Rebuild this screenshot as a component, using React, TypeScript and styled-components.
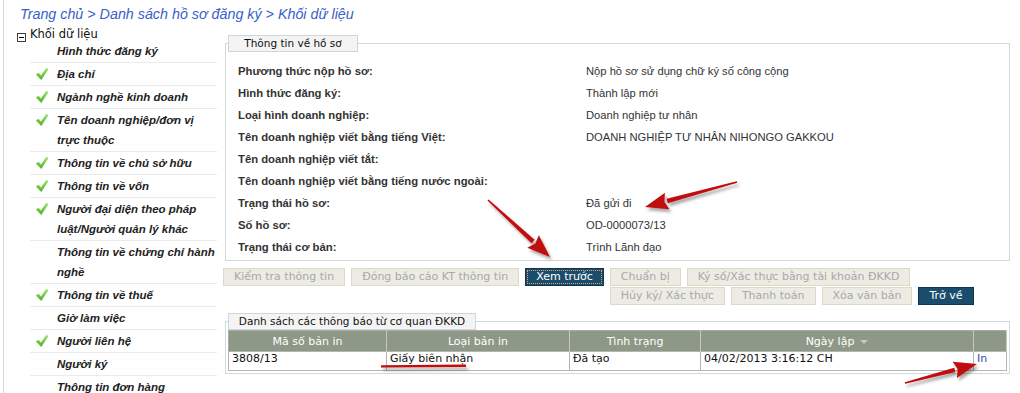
import React from 'react';
import styled, { createGlobalStyle } from 'styled-components';

const GlobalStyle = createGlobalStyle`
  html, body { margin: 0; padding: 0; background: #fff; }
  body { font-family: "DejaVu Sans", "Liberation Sans", Arial, sans-serif; }
`;

interface TreeEntry {
  label: string;
  done: boolean;
}

interface InfoRow {
  label: string;
  value: string;
}

const treeItems: TreeEntry[] = [
  { label: 'Hình thức đăng ký', done: false },
  { label: 'Địa chỉ', done: true },
  { label: 'Ngành nghề kinh doanh', done: true },
  { label: 'Tên doanh nghiệp/đơn vị trực thuộc', done: true },
  { label: 'Thông tin về chủ sở hữu', done: true },
  { label: 'Thông tin về vốn', done: true },
  { label: 'Người đại diện theo pháp luật/Người quản lý khác', done: true },
  { label: 'Thông tin về chứng chỉ hành nghề', done: false },
  { label: 'Thông tin về thuế', done: true },
  { label: 'Giờ làm việc', done: false },
  { label: 'Người liên hệ', done: true },
  { label: 'Người ký', done: false },
  { label: 'Thông tin đơn hàng', done: false },
];

const infoRows: InfoRow[] = [
  { label: 'Phương thức nộp hồ sơ:', value: 'Nộp hồ sơ sử dụng chữ ký số công cộng' },
  { label: 'Hình thức đăng ký:', value: 'Thành lập mới' },
  { label: 'Loại hình doanh nghiệp:', value: 'Doanh nghiệp tư nhân' },
  { label: 'Tên doanh nghiệp viết bằng tiếng Việt:', value: 'DOANH NGHIỆP TƯ NHÂN NIHONGO GAKKOU' },
  { label: 'Tên doanh nghiệp viết tắt:', value: '' },
  { label: 'Tên doanh nghiệp viết bằng tiếng nước ngoài:', value: '' },
  { label: 'Trạng thái hồ sơ:', value: 'Đã gửi đi' },
  { label: 'Số hồ sơ:', value: 'OD-0000073/13' },
  { label: 'Trạng thái cơ bản:', value: 'Trình Lãnh đạo' },
];

const Page = styled.div`
  position: relative;
  width: 1017px;
  height: 393px;
  margin-left: 3px;
  border-left: 1px solid #d6d6d6;
  box-sizing: border-box;
  overflow: hidden;
`;

const Breadcrumb = styled.div`
  padding: 5px 0 0 16px;
  font: italic 14.3px/18px "Liberation Sans", Arial, sans-serif;
  color: #3a5fc8;
`;

const Body = styled.div`
  display: flex;
  align-items: flex-start;
`;

const Sidebar = styled.div`
  width: 219px;
  flex-shrink: 0;
`;

const TreeHeader = styled.div`
  display: flex;
  align-items: flex-end;
  height: 17px;
  padding-left: 13px;
  font-size: 11.5px;
  line-height: 12px;
  color: #111;
`;

const MinusBox = styled.span`
  position: relative;
  width: 9px;
  height: 9px;
  margin: 0 4px -2px 0;
  border: 1px solid #3c3c3c;
  box-sizing: border-box;
  background: #fff;

  &::after {
    content: '';
    position: absolute;
    left: 1px;
    right: 1px;
    top: 3px;
    height: 1px;
    background: #000;
  }
`;

const TreeList = styled.ul`
  list-style: none;
  margin: 0 0 0 26px;
  padding: 0;
  width: 187px;
`;

const TreeItem = styled.li`
  display: flex;
  padding: 1px 0;
  border-bottom: 1px solid #ebebeb;
`;

const CheckSlot = styled.span`
  width: 27px;
  height: 20px;
  flex-shrink: 0;
  display: flex;
  align-items: center;
  padding-left: 5px;
  box-sizing: border-box;
`;

const TreeText = styled.span`
  width: 160px;
  font: italic bold 11.5px/20px "Liberation Sans", Arial, sans-serif;
  color: #222;
`;

const Main = styled.div`
  width: 787px;
  flex-shrink: 0;
`;

const Panel = styled.fieldset<{ $gap: number }>`
  margin: ${(p) => p.$gap}px 0 0 2px;
  padding: 0 2px 1px 2px;
  width: 785px;
  min-width: 0;
  box-sizing: border-box;
  border: 1px solid #cfd8da;
`;

const Legend = styled.legend<{ $w: number }>`
  width: ${(p) => p.$w}px;
  height: 17px;
  padding: 0;
  box-sizing: border-box;
  border: 1px solid #cfd6d9;
  background: #f4f4f4;
  text-align: left;
`;

const LegendText = styled.span`
  display: block;
  font-size: 10.5px;
  line-height: 15px;
  text-align: center;
  color: #111;
`;

const InfoGrid = styled.div`
  display: grid;
  grid-template-columns: 348px 1fr;
  grid-auto-rows: 22px;
  align-items: center;
  padding: 8px 0 1px 10px;
`;

const Label = styled.span`
  font: bold 11.3px "Liberation Sans", Arial, sans-serif;
  color: #333;
`;

const Value = styled.span`
  font: 11.2px "Liberation Sans", Arial, sans-serif;
  color: #333;
`;

const ButtonBar = styled.div`
  display: flex;
  align-items: flex-start;
  gap: 6px;
  margin-top: 7px;
`;

const ButtonGroup = styled.div`
  display: flex;
  gap: 6px;
`;

const ButtonWrap = styled.div`
  flex: 1;
  display: flex;
  flex-wrap: wrap;
  column-gap: 6px;
  row-gap: 1px;
`;

const Btn = styled.button<{ $primary?: boolean; $focused?: boolean }>`
  height: 18px;
  padding: 0 10px;
  font-family: "DejaVu Sans", sans-serif;
  font-size: 11px;
  line-height: 16px;
  white-space: nowrap;
  border: 1px solid ${(p) => (p.$primary ? '#0e3652' : '#dcd9c6')};
  background: ${(p) => (p.$primary ? '#1a4c6c' : '#ecebe4')};
  color: ${(p) => (p.$primary ? '#fff' : '#a8a8a8')};
  outline: ${(p) => (p.$focused ? '1px dotted #e0a55c' : 'none')};
  outline-offset: -3px;
  cursor: default;
`;

const Table = styled.table`
  width: 100%;
  margin-bottom: 1px;
  border-collapse: collapse;
  font-size: 11px;
  border: 1px solid #a9a9a9;
`;

const Th = styled.th<{ $w?: number }>`
  width: ${(p) => (p.$w ? `${p.$w}px` : 'auto')};
  height: 20px;
  padding: 0;
  background: #8d9886;
  color: #fff;
  font-weight: normal;
  text-align: center;
  border-right: 1px solid #c3c9bf;
`;

const Td = styled.td<{ $link?: boolean }>`
  height: 18px;
  padding: 0 3px;
  border: 1px solid #b4b4b4;
  color: ${(p) => (p.$link ? '#2d4fae' : '#111')};
  white-space: nowrap;
  vertical-align: top;
  line-height: 14px;
`;

const SortMark = styled.span`
  display: inline-block;
  margin-left: 6px;
  border-left: 4px solid transparent;
  border-right: 4px solid transparent;
  border-top: 4px solid #c4cac0;
  vertical-align: middle;
`;

const Annotations = styled.svg`
  position: absolute;
  left: -4px;
  top: 0;
  width: 1020px;
  height: 393px;
  pointer-events: none;
`;

const CheckIcon = () => (
  <svg width="14" height="14" viewBox="0 0 14 14">
    <defs>
      <linearGradient id="chk" x1="0" y1="0" x2="0" y2="1">
        <stop offset="0" stopColor="#a6e27a" />
        <stop offset="1" stopColor="#4fb022" />
      </linearGradient>
    </defs>
    <path d="M0.8 7.6 L3.6 5.8 L5.9 8.6 L11.4 0.8 L13.4 2.3 L6.3 13 Z" fill="url(#chk)" />
  </svg>
);

// red annotation arrows drawn over the screenshot
function arrowShape(x1: number, y1: number, x2: number, y2: number) {
  const len = Math.hypot(x2 - x1, y2 - y1);
  const ux = (x2 - x1) / len;
  const uy = (y2 - y1) / len;
  const px = -uy;
  const py = ux;
  const bx = x2 - ux * 23;
  const by = y2 - uy * 23;
  const shaft = [
    [x1 + px * 0.8, y1 + py * 0.8],
    [bx + px * 2.3, by + py * 2.3],
    [bx - px * 2.3, by - py * 2.3],
    [x1 - px * 0.8, y1 - py * 0.8],
  ];
  const head = [
    [x2, y2],
    [bx + px * 8.5, by + py * 8.5],
    [bx + ux * 3, by + uy * 3],
    [bx - px * 8.5, by - py * 8.5],
  ];
  const fmt = (pts: number[][]) => pts.map((p) => p.join(',')).join(' ');
  return { shaft: fmt(shaft), head: fmt(head) };
}

const arrows = [
  arrowShape(737, 182, 645, 207),
  arrowShape(488, 200, 550, 257),
  arrowShape(905, 383, 977, 364),
];

const App: React.FC = () => {
  return (
    <Page>
      <GlobalStyle />
      <Breadcrumb>Trang chủ &gt; Danh sách hồ sơ đăng ký &gt; Khối dữ liệu</Breadcrumb>
      <Body>
        <Sidebar>
          <TreeHeader>
            <MinusBox />
            Khối dữ liệu
          </TreeHeader>
          <TreeList>
            {treeItems.map((item) => (
              <TreeItem key={item.label}>
                <CheckSlot>{item.done && <CheckIcon />}</CheckSlot>
                <TreeText>{item.label}</TreeText>
              </TreeItem>
            ))}
          </TreeList>
        </Sidebar>

        <Main>
          <Panel $gap={12}>
            <Legend $w={130}>
              <LegendText>Thông tin về hồ sơ</LegendText>
            </Legend>
            <InfoGrid>
              {infoRows.map((row) => (
                <React.Fragment key={row.label}>
                  <Label>{row.label}</Label>
                  <Value>{row.value}</Value>
                </React.Fragment>
              ))}
            </InfoGrid>
          </Panel>

          <ButtonBar>
            <ButtonGroup>
              <Btn>Kiểm tra thông tin</Btn>
              <Btn>Đóng báo cáo KT thông tin</Btn>
              <Btn $primary $focused>Xem trước</Btn>
            </ButtonGroup>
            <ButtonWrap>
              <Btn>Chuẩn bị</Btn>
              <Btn>Ký số/Xác thực bằng tài khoản ĐKKD</Btn>
              <Btn>Hủy ký/ Xác thực</Btn>
              <Btn>Thanh toán</Btn>
              <Btn>Xóa văn bản</Btn>
              <Btn $primary>Trở về</Btn>
            </ButtonWrap>
          </ButtonBar>

          <Panel $gap={8}>
            <Legend $w={248}>
              <LegendText>Danh sách các thông báo từ cơ quan ĐKKD</LegendText>
            </Legend>
            <Table>
              <thead>
                <tr>
                  <Th $w={157}>Mã số bản in</Th>
                  <Th $w={182}>Loại bản in</Th>
                  <Th $w={130}>Tình trạng</Th>
                  <Th $w={272}>
                    Ngày lập
                    <SortMark />
                  </Th>
                  <Th />
                </tr>
              </thead>
              <tbody>
                <tr>
                  <Td>3808/13</Td>
                  <Td>Giấy biên nhận</Td>
                  <Td>Đã tạo</Td>
                  <Td>04/02/2013 3:16:12 CH</Td>
                  <Td $link>In</Td>
                </tr>
              </tbody>
            </Table>
          </Panel>
        </Main>
      </Body>

      <Annotations viewBox="0 0 1020 393">
        <defs>
          <filter id="shade" x="-20%" y="-20%" width="140%" height="140%">
            <feDropShadow dx="2" dy="3" stdDeviation="1.6" floodColor="#000" floodOpacity="0.35" />
          </filter>
        </defs>
        <g fill="#c00a0a" filter="url(#shade)">
          {arrows.map((a, i) => (
            <g key={i}>
              <polygon points={a.shaft} />
              <polygon points={a.head} />
            </g>
          ))}
          <path d="M381 365.2 L466 364.6 L466 367 L381 367.6 Z" />
        </g>
      </Annotations>
    </Page>
  );
};

export default App;
